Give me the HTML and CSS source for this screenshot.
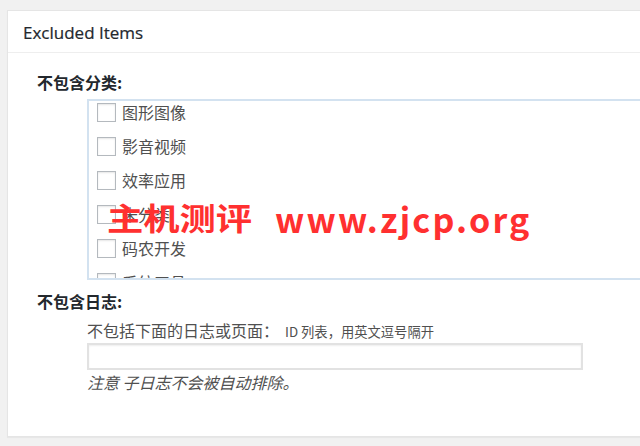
FILE: index.html
```html
<!DOCTYPE html>
<html lang="zh-CN">
<head>
<meta charset="utf-8">
<title>Excluded Items</title>
<link rel="stylesheet" href="styles.css">
</head>
<body>
<div class="page">
  <div class="card">
    <h2 class="card-title">Excluded Items</h2>
    <div class="card-body">
      <div class="field-label">不包含分类:</div>
      <div class="checklist">
        <label class="item"><input type="checkbox" class="cb"><span>图形图像</span></label>
        <label class="item"><input type="checkbox" class="cb"><span>影音视频</span></label>
        <label class="item"><input type="checkbox" class="cb"><span>效率应用</span></label>
        <label class="item"><input type="checkbox" class="cb"><span>未分类</span></label>
        <label class="item"><input type="checkbox" class="cb"><span>码农开发</span></label>
        <label class="item"><input type="checkbox" class="cb"><span>系统工具</span></label>
      </div>
      <div class="field-label second">不包含日志:</div>
      <div class="posts">
        <div class="posts-desc">不包括下面的日志或页面：<small>ID 列表，用英文逗号隔开</small></div>
        <input type="text" class="text-input">
        <div class="note">注意 子日志不会被自动排除。</div>
      </div>
    </div>
  </div>
  <div class="watermark"><span class="wm-cn">主机测评</span><span class="wm-en">www.zjcp.org</span></div>
</div>
</body>
</html>
```
FILE: styles.css
```css
html, body {
  margin: 0;
  padding: 0;
  background: #f1f1f1;
  overflow: hidden;
}
.page {
  position: relative;
  width: 640px;
  height: 446px;
  padding: 10px 0 0 7px;
  box-sizing: border-box;
  font-family: "Noto Sans CJK SC", "Noto Sans", sans-serif;
}
.card {
  width: 700px;
  height: 427px;
  box-sizing: border-box;
  background: #fff;
  border: 1px solid #e5e5e5;
  box-shadow: 0 1px 1px rgba(0,0,0,0.04);
}
.card-title {
  margin: 0;
  height: 42px;
  box-sizing: border-box;
  padding: 11px 0 0 15px;
  font-family: "Open Sans", "Noto Sans", sans-serif;
  font-weight: 400;
  font-size: 17px;
  line-height: 22px;
  color: #23282d;
  -webkit-text-stroke: 0.2px #23282d;
  border-bottom: 1px solid #eee;
}
.card-body {
  padding: 18px 0 0 29px;
}
.field-label {
  font-weight: 700;
  font-size: 16px;
  line-height: 22px;
  color: #23282d;
}
.checklist {
  margin: 6px 0 0 50px;
  height: 181px;
  box-sizing: border-box;
  border: 2px solid #d3e2f0;
  overflow: hidden;
  padding: 2px 0 0 8px;
}
.item {
  display: flex;
  align-items: center;
  gap: 6px;
  height: 19px;
  margin-bottom: 15px;
  font-size: 16px;
  color: #505050;
}
.item span {
  position: relative;
  top: -1px;
}
.cb {
  appearance: none;
  -webkit-appearance: none;
  margin: 0;
  width: 19px;
  height: 19px;
  box-sizing: border-box;
  border: 1px solid #b4b9be;
  background: #fff;
  box-shadow: inset 0 1px 2px rgba(0,0,0,0.1);
  flex: none;
}
.field-label.second {
  margin-top: 10px;
}
.posts {
  margin: 7px 0 0 50px;
}
.posts-desc {
  font-size: 16px;
  line-height: 22px;
  color: #505050;
}
.posts-desc small {
  font-size: 13.3px;
  margin-left: 6px;
}
.text-input {
  display: block;
  margin: 0;
  width: 496px;
  height: 27px;
  box-sizing: border-box;
  border: 2px solid #e2e2e2;
  box-shadow: inset 0 1px 2px rgba(0,0,0,0.07);
  background: #fff;
  padding: 0;
}
.note {
  margin-top: 1px;
  font-size: 16px;
  line-height: 22px;
  font-style: italic;
  color: #505050;
}
.watermark {
  position: absolute;
  left: 107px;
  top: 198px;
  height: 44px;
  display: flex;
  align-items: center;
  color: #ff3030;
  font-weight: 700;
  white-space: nowrap;
}
.wm-cn {
  display: inline-block;
  font-size: 31px;
  line-height: 44px;
  letter-spacing: 0;
  transform: scaleX(1.17);
  transform-origin: left center;
  width: 145px;
  margin-right: 23px;
  position: relative;
  top: -3px;
}
.wm-en {
  font-size: 34px;
  line-height: 44px;
  letter-spacing: 2.2px;
  position: relative;
  top: -1px;
}
```
